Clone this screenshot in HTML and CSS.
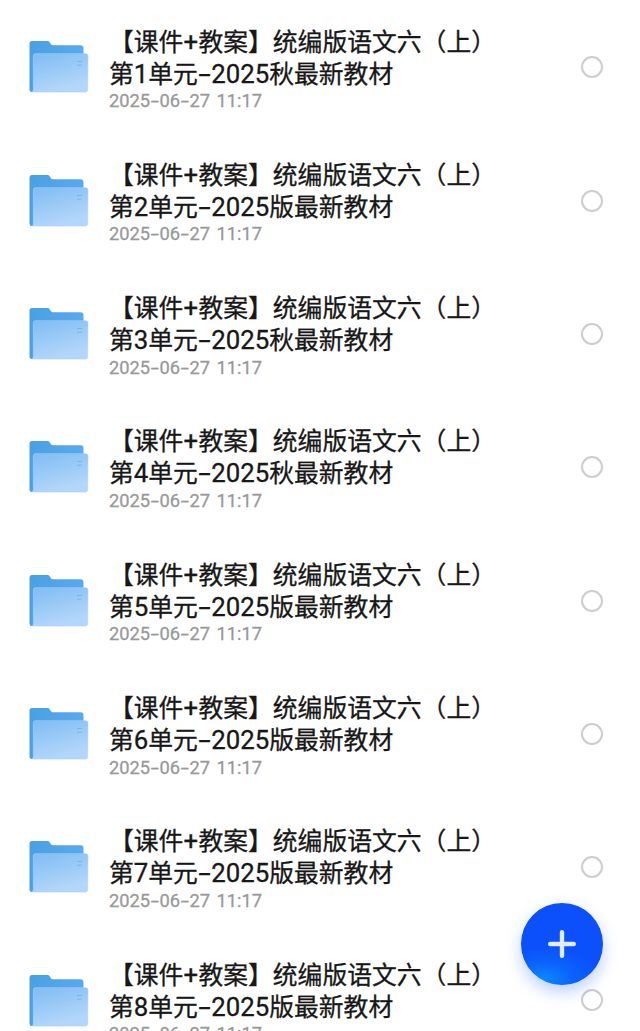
FILE: index.html
```html
<!DOCTYPE html>
<html lang="zh-CN">
<head>
<meta charset="utf-8">
<title>文件列表</title>
<link rel="stylesheet" href="styles.css">
</head>
<body>
<svg class="defs" aria-hidden="true">
  <defs>
    <linearGradient id="back" x1="0" y1="0" x2="1" y2="0"><stop offset="0" stop-color="#4b9fe3"/><stop offset="1" stop-color="#58aaee"/></linearGradient>
    <linearGradient id="front" x1="0" y1="0" x2=".4" y2="1"><stop offset="0" stop-color="#7fbcf3"/><stop offset="1" stop-color="#b3d7fa"/></linearGradient>
    <symbol id="folder" viewBox="0 0 60 54">
      <path fill="url(#back)" d="M3 1H18.5Q20 1 20.8 2.4L22 4.3Q22.6 5.2 24 5.2H51.5Q54.5 5.2 54.5 8.2V52H3Q.5 52 .5 49.5V4Q.5 1 3 1Z"/>
      <path fill="url(#front)" stroke="#a6d2f9" stroke-width=".6" d="M6.3 13.7H56.8Q59 13.7 59 15.9L58.6 49.8Q58.6 52 56.4 52H3Q4.3 51.3 4.3 49.3V15.7Q4.3 13.7 6.3 13.7Z"/>
      <path stroke="#82b4e2" stroke-width="1" d="M48 21.5H53.2M48 25.2H52.6"/>
    </symbol>
  </defs>
</svg>
<main class="list" id="list"></main>
<button class="add" aria-label="新建"><svg viewBox="0 0 28 28"><path d="M14 2.2V25.8M2.2 14H25.8"/></svg></button>
<script src="list.js"></script>
</body>
</html>
```
FILE: styles.css
```css
* { box-sizing: border-box; }
body { margin: 0; width: 640px; height: 1031px; overflow: hidden; background: #fff; font-family: Roboto, "Noto Sans CJK SC", sans-serif; }
.defs { position: absolute; width: 0; height: 0; }
.list { height: 1031px; overflow: hidden; display: flex; flex-direction: column; }
.row { flex: 0 0 133.33px; display: flex; align-items: flex-start; padding: 23.5px 37px 0 28.5px; }
.folder { flex: none; width: 60px; height: 54px; margin-top: 16.8px; }
.text { flex: 1; margin-left: 20.5px; white-space: nowrap; }
.title { height: 32px; line-height: 32px; font-family: "Noto Sans CJK SC", sans-serif; font-size: 24.8px; font-weight: 400; color: #171717; -webkit-text-stroke: .3px #171717; }
.latin { font-family: Roboto, sans-serif; font-size: 25.8px; -webkit-text-stroke: .3px #171717; }
.dash { display: inline-block; width: 13.3px; text-align: center; transform: scaleX(1.7); }
.plus { display: inline-block; width: 15px; text-align: center; }
.date { height: 22px; line-height: 22px; margin-top: 2.5px; font-size: 18.3px; color: #999; -webkit-text-stroke: .3px #999; }
.date .dash { width: 9.4px; transform: scaleX(1.6); }
.time { margin-left: 6.5px; }
.check { flex: none; width: 22px; height: 22px; margin-top: 32.7px; border: 2px solid #cdcdcd; border-radius: 50%; }
.add { position: absolute; left: 521px; top: 903px; width: 82px; height: 82px; padding: 0; border: 0; border-radius: 50%; display: grid; place-items: center; background: radial-gradient(ellipse 58px 32px at 28% 92%, #0b88ff, rgba(11,120,255,.45) 50%, rgba(11,80,251,0) 100%), #0b50fb; box-shadow: 0 7px 16px rgba(30,95,255,.3); }
.add svg { width: 28px; height: 28px; }
.add path { stroke: #e2ecff; stroke-width: 4.4; stroke-linecap: round; }
```
FILE: list.js
```js
const editions = ["秋", "版", "秋", "秋", "版", "版", "版", "版"];
document.getElementById("list").innerHTML = editions.map((edition, i) => `
  <article class="row">
    <svg class="folder"><use href="#folder"/></svg>
    <div class="text">
      <div class="title">【课件<span class="latin plus">+</span>教案】统编版语文六（上）</div>
      <div class="title">第<span class="latin">${i + 1}</span>单元<span class="latin dash">-</span><span class="latin">2025</span>${edition}最新教材</div>
      <div class="date">2025<span class="dash">-</span>06<span class="dash">-</span>27<span class="time">11:17</span></div>
    </div>
    <span class="check"></span>
  </article>`).join("");
```
